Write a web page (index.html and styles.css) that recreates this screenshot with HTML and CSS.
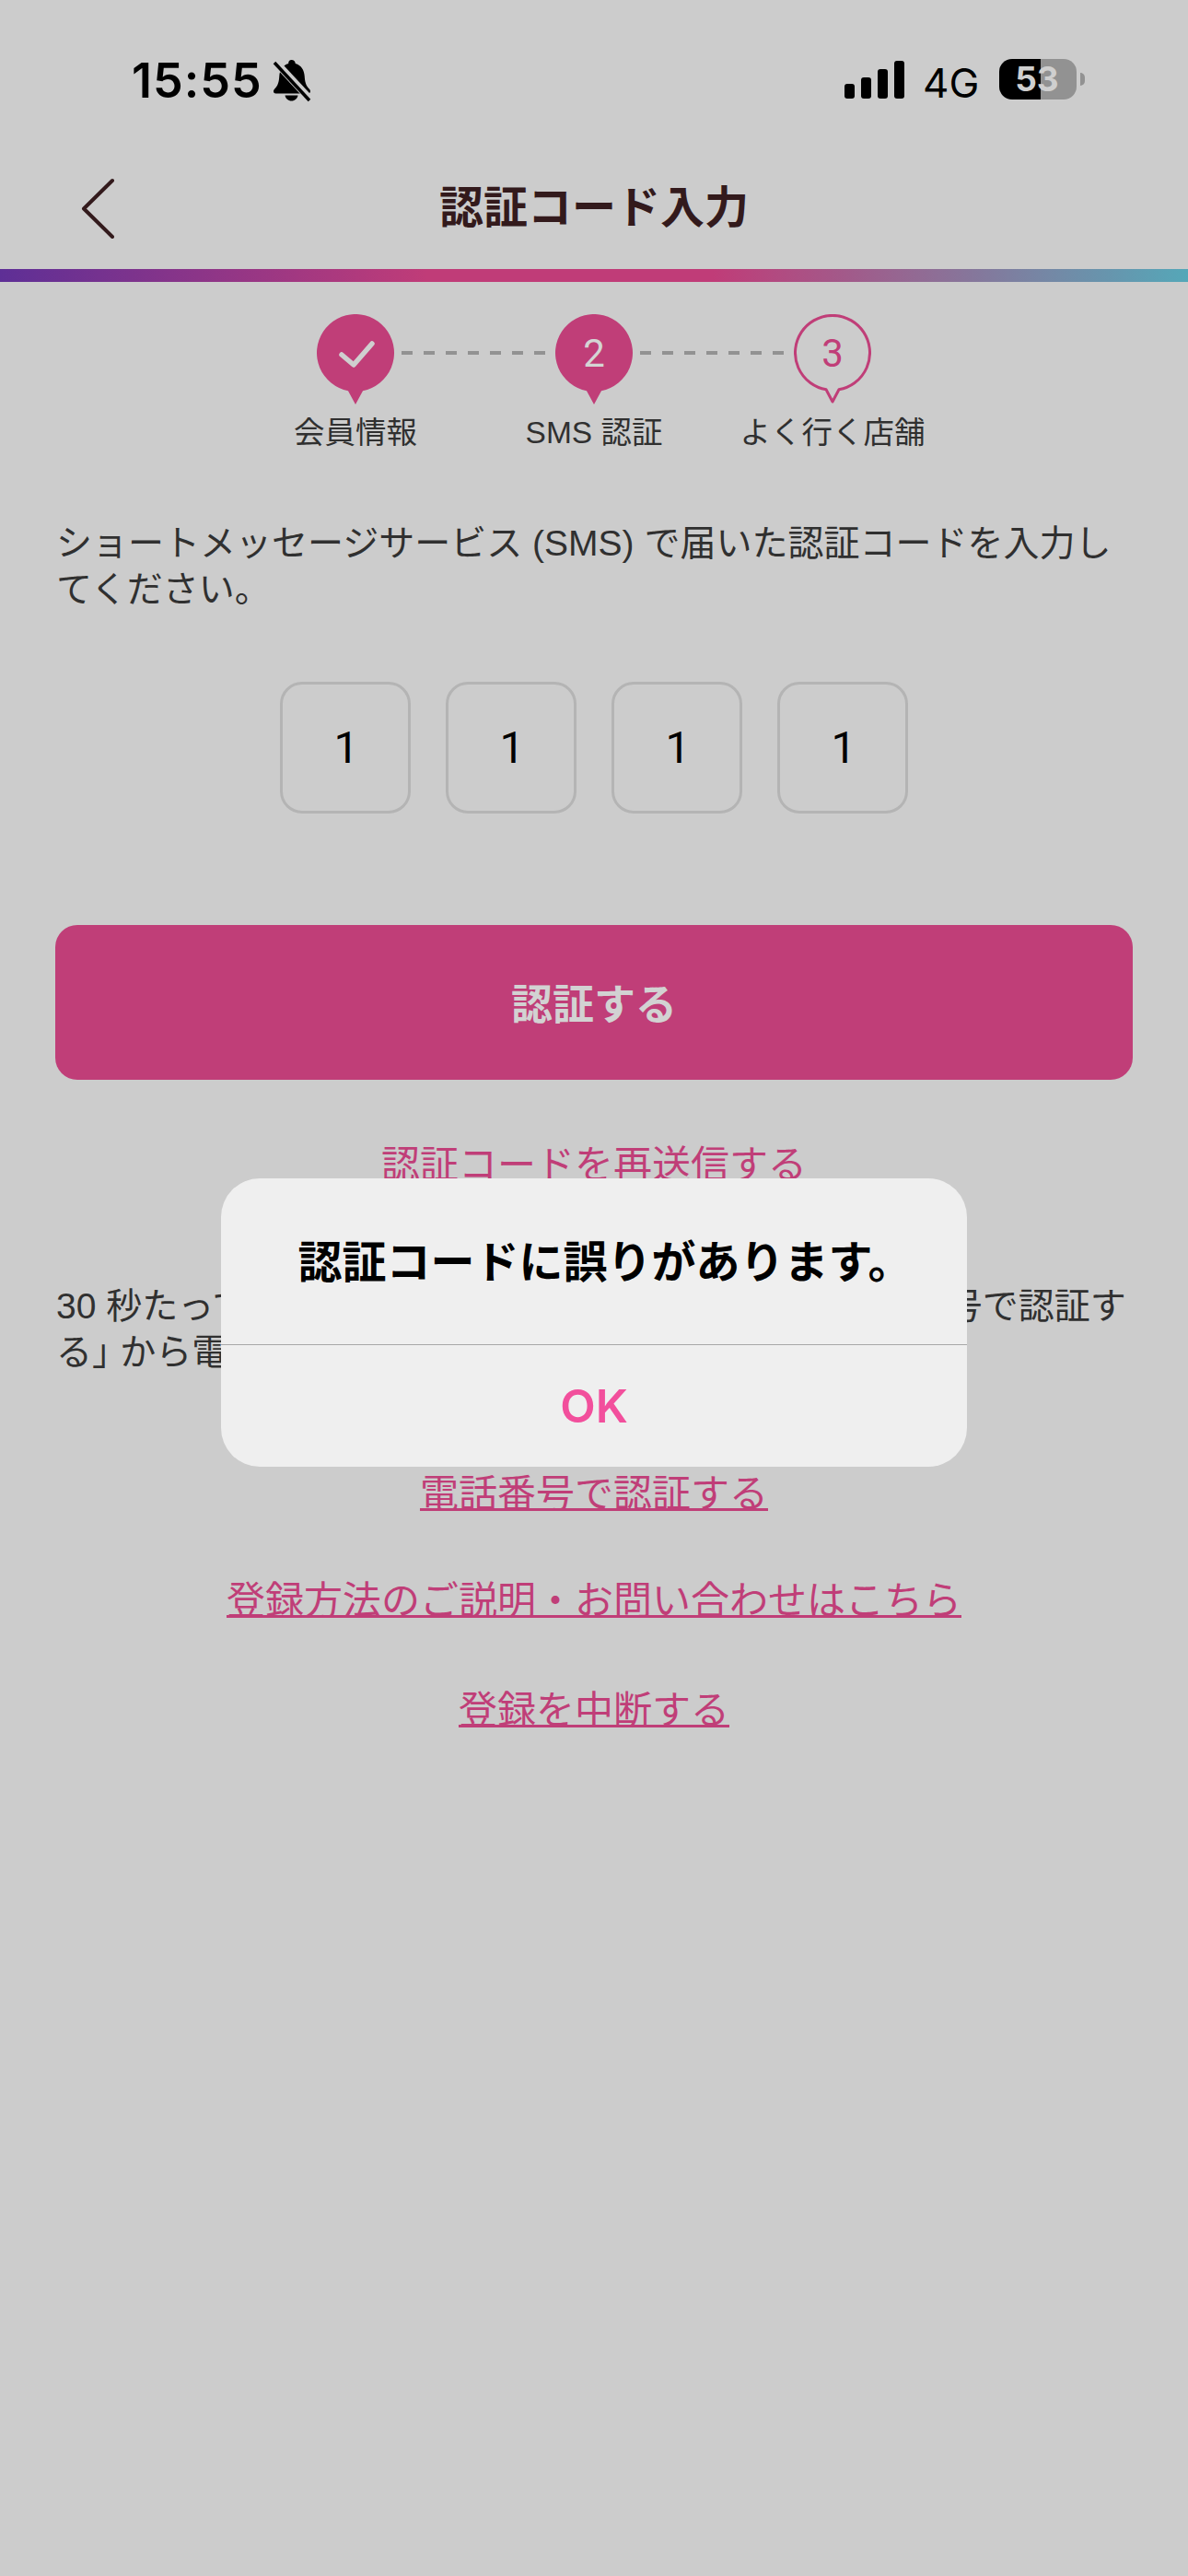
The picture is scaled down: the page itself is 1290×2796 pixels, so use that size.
FILE: index.html
```html
<!DOCTYPE html>
<html lang="ja">
<head>
<meta charset="utf-8">
<title>認証コード入力</title>
<link rel="stylesheet" href="styles.css">
</head>
<body>
<div class="screen">
  <div class="status">
    <div class="status-left">
      <span class="time">15:55</span>
      <svg class="bell" viewBox="0 0 44 48" width="44" height="48" aria-hidden="true">
        <path class="fill" d="M21.5 1c2.4 0 4 1.700 4.300 3.900 6.200 1.800 9.500 7 9.900 13.600.4 6.500 1.300 10.200 5.300 14.300 1.500 1.500 1.500 4.700-1.500 4.700H4.500c-3 0-3-3.200-1.500-4.700 4-4.100 4.900-7.800 5.300-14.300.4-6.600 3.700-11.800 9.900-13.600C18 2.700 19.600 1 21.500 1z"/>
        <path class="fill" d="M14.500 39.500h14c-.6 3.500-3.500 6-7 6s-6.400-2.500-7-6z"/>
        <path class="slash-gap" d="M3 2l40 43"/>
        <path class="slash" d="M3 4l38 41"/>
      </svg>
    </div>
    <div class="status-right">
      <div class="signal"><i class="b1"></i><i class="b2"></i><i class="b3"></i><i class="b4"></i></div>
      <span class="net">4G</span>
      <div class="battery"><div class="battery-body"><span>53</span></div><i class="battery-nub"></i></div>
    </div>
  </div>

  <header class="nav">
    <svg class="back" viewBox="0 0 36 66" width="36" height="66" aria-hidden="true"><path d="M34 3L3 33.500l31 30.500"/></svg>
    <h1>認証コード入力</h1>
  </header>
  <div class="rainbow"></div>

  <div class="track">
    <svg class="marker" viewBox="0 0 84 98" width="84" height="98">
      <path class="pin-fill" d="M34 83.200A42 42 0 1 1 50 83.200L42 98z"/>
      <path class="tick" d="M27 44l13 11 20-23"/>
    </svg>
    <i class="dash"></i>
    <svg class="marker" viewBox="0 0 84 98" width="84" height="98">
      <path class="pin-fill" d="M34 83.200A42 42 0 1 1 50 83.200L42 98z"/>
      <text class="num on" x="42" y="57">2</text>
    </svg>
    <i class="dash"></i>
    <svg class="marker" viewBox="0 0 84 98" width="84" height="98">
      <path class="pin-line" d="M35 81.800A40.500 40.500 0 1 1 49 81.800L42 95z"/>
      <text class="num" x="42" y="57">3</text>
    </svg>
  </div>
  <div class="labels">
    <span>会員情報</span><span>SMS 認証</span><span>よく行く店舗</span>
  </div>

  <p class="lead">ショートメッセージサービス (SMS) で届いた認証コードを入力してください。</p>

  <div class="codes">
    <div class="code">1</div><div class="code">1</div><div class="code">1</div><div class="code">1</div>
  </div>

  <button class="submit" type="button">認証する</button>

  <a class="resend">認証コードを再送信する</a>

  <p class="note">30 秒たっても SMS が届かない場合は、下記の ｢電話番号で認証する｣ から電話番号で認証してください。</p>

  <div class="links">
    <a>電話番号で認証する</a>
    <a>登録方法のご説明・お問い合わせはこちら</a>
    <a class="last">登録を中断する</a>
  </div>

  <div class="dialog">
    <div class="dialog-msg">認証コードに誤りがあります。</div>
    <div class="dialog-btn">OK</div>
  </div>
</div>
</body>
</html>
```
FILE: styles.css
```css
* { box-sizing: border-box; }
html, body { margin: 0; padding: 0; }
body {
  background: #cccccc;
  font-family: "Liberation Sans", "Noto Sans CJK JP", sans-serif;
  color: #303030;
}
.screen { position: relative; width: 1290px; height: 2796px; overflow: hidden; }

.status {
  height: 172px;
  padding: 60px 112px 0 143px;
  display: flex;
  justify-content: space-between;
  align-items: flex-start;
}
.status-left { display: flex; align-items: flex-start; gap: 10px; }
.time { font: 600 52px/56px Inter, sans-serif; color: #000; letter-spacing: 1px; }
.bell { margin-top: 4px; }
.bell .fill { fill: #000; }
.bell .slash-gap { stroke: #ccc; stroke-width: 8; fill: none; }
.bell .slash { stroke: #000; stroke-width: 3.500; fill: none; }
.status-right { display: flex; align-items: flex-start; }
.signal { display: flex; align-items: flex-end; gap: 7px; height: 41px; margin-top: 6px; }
.signal i { display: block; width: 11px; background: #000; border-radius: 3px; }
.signal .b1 { height: 16px; }
.signal .b2 { height: 23px; }
.signal .b3 { height: 32px; }
.signal .b4 { height: 41px; }
.net { font: 400 44px/52px Inter, sans-serif; color: #000; margin: 4px 0 0 20px; width: 83px; }
.battery { display: flex; align-items: center; height: 44px; margin-top: 4px; }
.battery-body {
  width: 84px; height: 44px; border-radius: 14px;
  background: linear-gradient(90deg, #000 0 45px, #929292 45px);
  display: flex; align-items: center; justify-content: center;
  padding-right: 2px;
}
.battery-body span { font: 700 37px/44px Inter, sans-serif; color: #cfcfcf; }
.battery-nub { display: block; width: 5px; height: 14px; margin-left: 4px; background: #929292; border-radius: 0 7px 7px 0; }

.nav { height: 120px; position: relative; display: flex; align-items: center; justify-content: center; padding-bottom: 13px; }
.nav h1 { margin: 0; font-size: 48px; line-height: 64px; font-weight: 700; color: #331a1c; }
.back { position: absolute; left: 88px; top: 21px; }
.back path { fill: none; stroke: #331a1c; stroke-width: 4; stroke-linecap: round; stroke-linejoin: round; }
.rainbow {
  height: 14px;
  background: linear-gradient(90deg, #5e2f96 0%, #c03c78 36%, #c03c78 60%, #55a7b8 100%);
}

.track { display: flex; justify-content: center; align-items: flex-start; margin-top: 35px; }
.marker { display: block; flex: none; }
.pin-fill { fill: #c03e78; }
.pin-line { fill: none; stroke: #c03e78; stroke-width: 3; stroke-linejoin: round; }
.tick { fill: none; stroke: #cfcfcf; stroke-width: 5.500; stroke-linecap: round; stroke-linejoin: round; }
.num { font: 400 42px Roboto, sans-serif; text-anchor: middle; fill: #c03e78; }
.num.on { fill: #d4d4d4; }
.dash {
  display: block; width: 159px; height: 4px; margin: 40px 8px 0;
  background: repeating-linear-gradient(90deg, #929292 0 12px, transparent 12px 24px);
}
.labels { display: grid; grid-template-columns: repeat(3, 259px); justify-content: center; margin-top: 8px; }
.labels span { text-align: center; font-size: 33.5px; line-height: 46px; }

.lead { margin: 72px 60px 0 61px; font-size: 39px; line-height: 50px; }

.codes { display: flex; justify-content: center; gap: 38px; margin-top: 75px; }
.code {
  width: 142px; height: 143px; border: 3px solid #b4b4b4; border-radius: 24px;
  display: flex; align-items: center; justify-content: center;
  font: 400 48px Roboto, sans-serif; color: #000; padding-left: 2px;
}

.submit {
  display: block; width: 1170px; height: 168px; margin: 121px 60px 0;
  border: 0; border-radius: 24px; background: #c03e78; color: #d2d2d2;
  font-family: inherit; font-size: 45px; font-weight: 700; padding-bottom: 3px;
}

.resend { display: block; margin-top: 63px; text-align: center; font-size: 42px; line-height: 60px; color: #c03e78; text-decoration: underline; text-decoration-thickness: 3px; text-underline-offset: 1px; text-decoration-skip-ink: none; }

.note { margin: 98px 60px 0 61px; font-size: 39px; line-height: 50px; }

.links { display: flex; flex-direction: column; align-items: center; gap: 56px; margin-top: 99px; }
.links a { font-size: 42px; line-height: 60px; color: #c03e78; text-decoration: underline; text-decoration-thickness: 3px; text-underline-offset: 1px; text-decoration-skip-ink: none; }
.links .last { margin-top: 3px; }

.dialog {
  position: absolute; left: 240px; top: 1279px; width: 810px; height: 313px;
  background: #efefef; border-radius: 42px;
  display: flex; flex-direction: column;
}
.dialog-msg {
  height: 181px; border-bottom: 1px solid #a8a8a8;
  display: flex; align-items: center; justify-content: center;
  font-size: 48px; font-weight: 700; color: #000; padding: 0 0 6px 24px;
}
.dialog-btn {
  flex: 1; display: flex; align-items: center; justify-content: center;
  font: 600 50px Inter, sans-serif; color: #f24f9c;
}
```
